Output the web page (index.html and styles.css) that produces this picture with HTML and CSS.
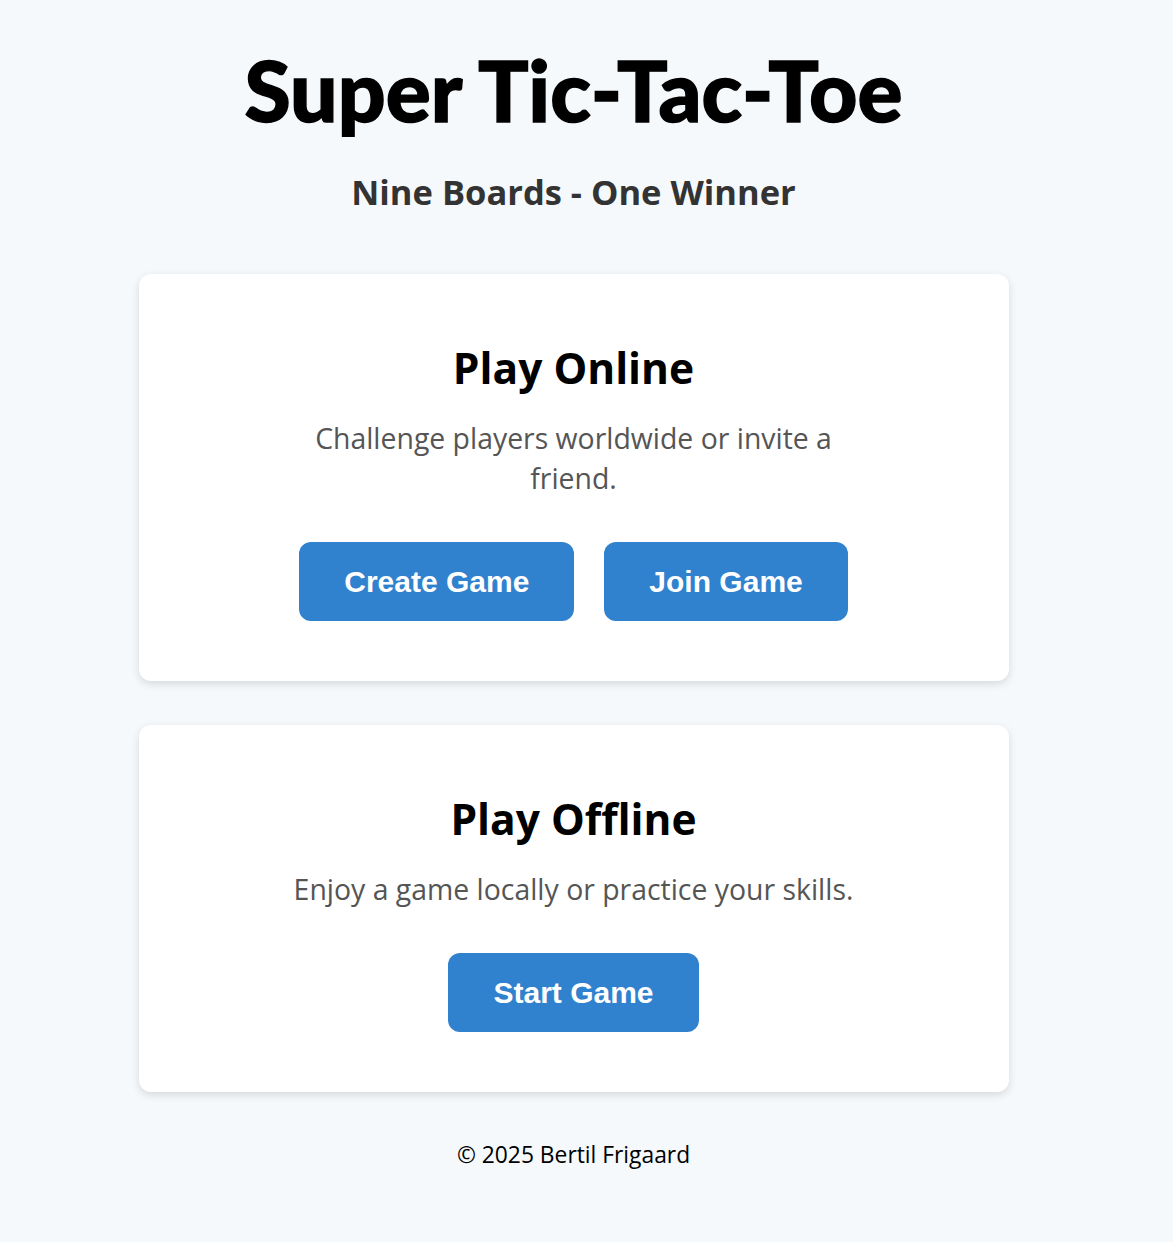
FILE: index.html
```html
<!DOCTYPE html>
<html lang="en">
<head>
<meta charset="utf-8">
<title>Super Tic-Tac-Toe</title>
<link rel="stylesheet" href="styles.css">
</head>
<body>
<main class="page">
  <header class="hero">
    <h1 class="title">Super Tic-Tac-Toe</h1>
    <h2 class="subtitle">Nine Boards - One Winner</h2>
  </header>
  <section class="card">
    <h3 class="card-title">Play Online</h3>
    <p class="card-text">Challenge players worldwide or invite a friend.</p>
    <div class="actions">
      <button class="btn btn-create">Create Game</button>
      <button class="btn btn-join">Join Game</button>
    </div>
  </section>
  <section class="card">
    <h3 class="card-title">Play Offline</h3>
    <p class="card-text card-text-wide">Enjoy a game locally or practice your skills.</p>
    <div class="actions">
      <button class="btn btn-start">Start Game</button>
    </div>
  </section>
  <footer class="footer">© 2025 Bertil Frigaard</footer>
</main>
</body>
</html>
```
FILE: styles.css
```css
* { box-sizing: border-box; }
body {
  margin: 0;
  padding-right: 26px;
  background: #f5f9fc;
  font-family: "Open Sans", "Noto Sans", sans-serif;
  color: #000;
}
.page {
  width: 870px;
  margin: 0 auto;
  display: flex;
  flex-direction: column;
  align-items: stretch;
  padding-top: 42px;
  padding-bottom: 60px;
}
.hero { text-align: center; }
.title {
  margin: 0;
  font-family: "Lato", "Open Sans", sans-serif;
  font-weight: 900;
  font-size: 84px;
  line-height: 96px;
  color: #000;
  -webkit-text-stroke: 1.4px #000;
}
.subtitle {
  margin: 32px 0 0;
  font-family: "Open Sans", sans-serif;
  font-weight: 700;
  font-size: 34.5px;
  line-height: 43px;
  color: #333;
}
.card {
  margin-top: 61px;
  background: #fff;
  border-radius: 12px;
  box-shadow: 0 3px 8px rgba(0,0,0,0.13);
  padding: 67px 60px 60px;
  display: flex;
  flex-direction: column;
  align-items: center;
  text-align: center;
}
.card + .card { margin-top: 44px; }
.card-title {
  margin: 0;
  font-weight: 700;
  font-size: 42.5px;
  line-height: 53px;
}
.card-text {
  margin: 24px 0 0;
  max-width: 580px;
  font-size: 28.4px;
  line-height: 40px;
  color: #555;
}
.card-text-wide { max-width: 660px; }
.actions {
  margin-top: 44px;
  display: flex;
  gap: 30px;
  justify-content: center;
}
.btn {
  height: 79px;
  border: none;
  border-radius: 12px;
  background: #3182ce;
  color: #fff;
  font-family: "Liberation Sans", Arial, sans-serif;
  font-weight: 700;
  font-size: 30px;
  padding: 0 45px;
  cursor: pointer;
}
.footer {
  margin-top: 48px;
  text-align: center;
  font-size: 22.8px;
  line-height: 29px;
  color: #000;
}
```
